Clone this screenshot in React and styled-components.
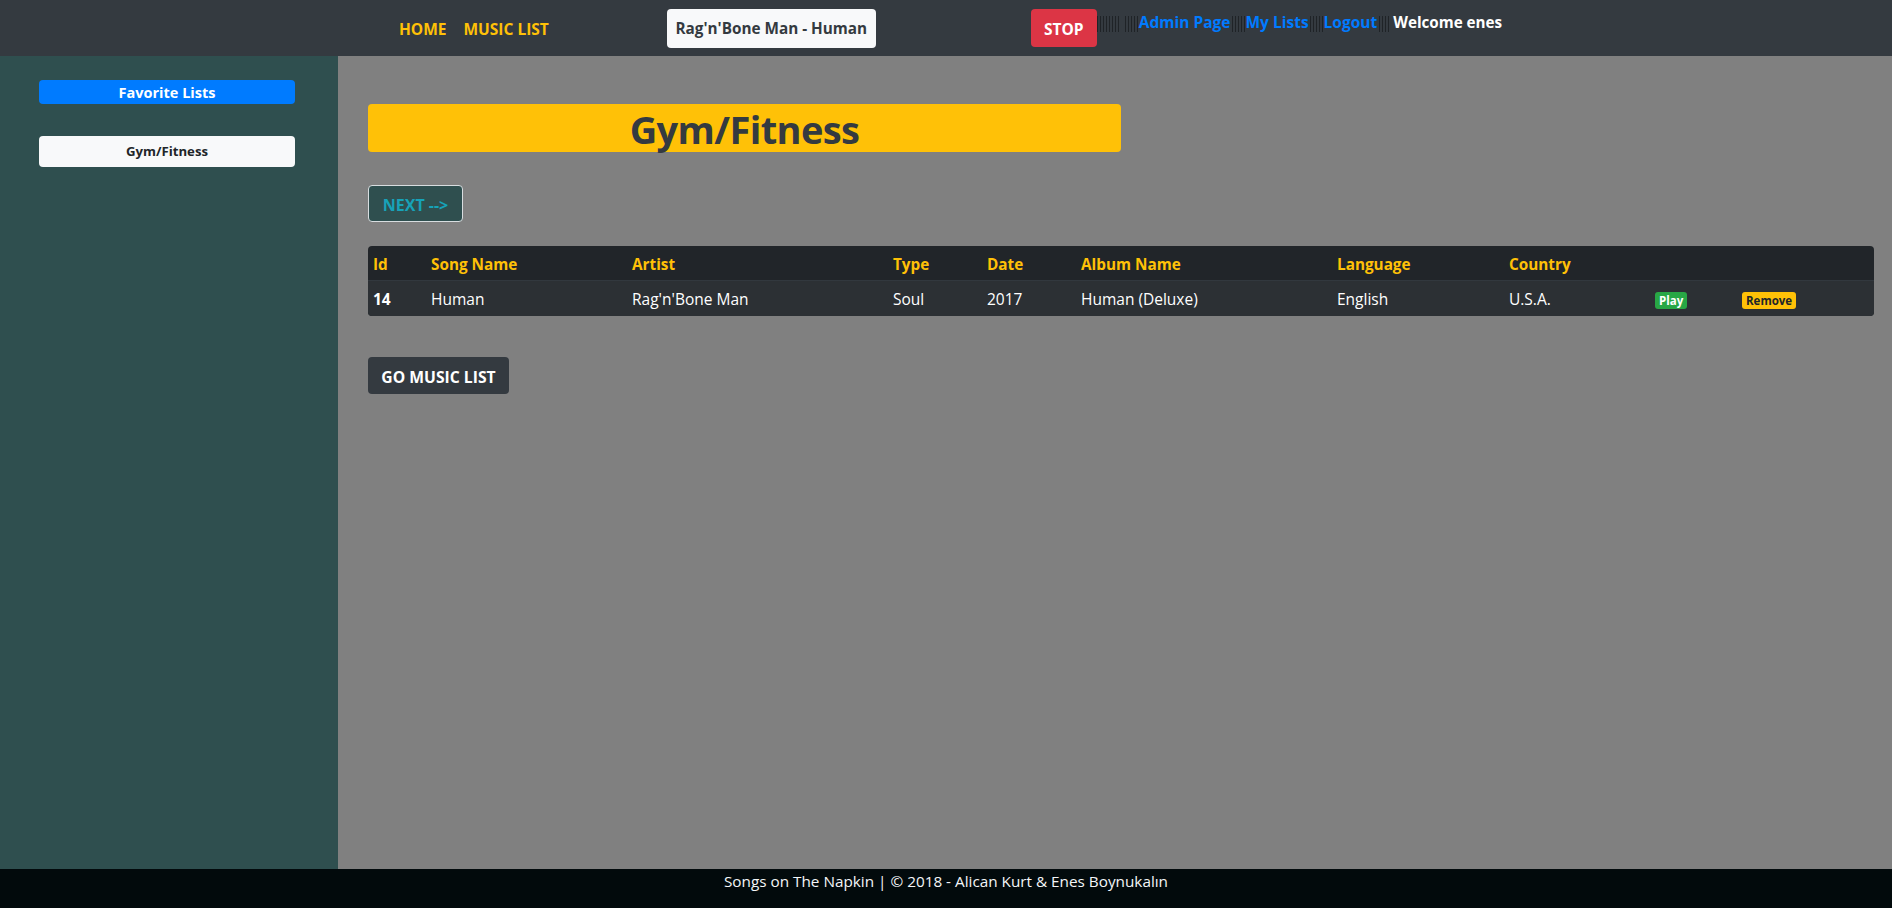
import React from "react";
import styled, { createGlobalStyle } from "styled-components";

const GlobalStyle = createGlobalStyle`
  html, body {
    margin: 0;
    padding: 0;
  }
  body {
    font-family: "Open Sans", "Noto Sans", sans-serif;
    font-size: 15px;
    line-height: 1.5;
    color: #212529;
    background: #808080;
  }
`;

const Page = styled.div`
  display: flex;
  flex-direction: column;
  width: 100%;
  height: 908px;
`;

const Header = styled.header`
  display: flex;
  align-items: center;
  height: 56px;
  flex-shrink: 0;
  background: #343a40;
  padding-left: 399px;
  box-sizing: border-box;
`;

const NavLink = styled.a`
  color: ${(p) => p.color || "#ffc107"};
  font-weight: 700;
  font-size: 15.5px;
  text-decoration: none;
  margin-right: ${(p) => p.gap || 0}px;
  line-height: 1;
  align-self: ${(p) => (p.raised ? "flex-start" : "center")};
  margin-top: ${(p) => (p.raised ? "15px" : "4px")};
`;

const NowPlaying = styled.div`
  display: flex;
  align-items: center;
  justify-content: center;
  width: 209px;
  height: 39px;
  margin-right: 155px;
  background: #f8f9fa;
  border-radius: 4px;
  color: #343a40;
  font-weight: 700;
  font-size: 15.3px;
`;

const StopButton = styled.button`
  width: 66px;
  height: 38px;
  border: none;
  border-radius: 4px;
  background: #dc3545;
  color: #fff;
  font-family: inherit;
  font-weight: 700;
  font-size: 15.5px;
  padding: 2px 0 0;
`;

const Bars = styled.span`
  display: inline-block;
  align-self: flex-start;
  margin-top: 16px;
  width: ${(p) => p.w}px;
  height: 16px;
  margin-left: ${(p) => p.ml || 0}px;
  background: repeating-linear-gradient(
    90deg,
    #1f2327 0px,
    #1f2327 1px,
    transparent 1px,
    transparent 3px
  );
`;

const Welcome = styled.span`
  align-self: flex-start;
  margin-top: 11px;
  margin-left: 2px;
  color: #fff;
  font-weight: 700;
  font-size: 15.2px;
`;

const Middle = styled.div`
  display: flex;
  flex: 1;
  min-height: 0;
`;

const Sidebar = styled.aside`
  width: 338px;
  flex-shrink: 0;
  background: #2f4f4f;
  padding: 24px 43px 0 39px;
  box-sizing: border-box;
  display: flex;
  flex-direction: column;
  gap: 32px;
`;

const SideButton = styled.div`
  display: flex;
  align-items: center;
  justify-content: center;
  height: ${(p) => (p.primary ? 24 : 31)}px;
  padding-top: ${(p) => (p.primary ? 2 : 1)}px;
  box-sizing: border-box;
  border-radius: 4px;
  background: ${(p) => (p.primary ? "#007bff" : "#f8f9fa")};
  color: ${(p) => (p.primary ? "#fff" : "#212529")};
  font-weight: 700;
  font-size: ${(p) => (p.primary ? 14.5 : 13.2)}px;
`;

const Main = styled.main`
  flex: 1;
  padding: 48px 18px 0 30px;
  display: flex;
  flex-direction: column;
  align-items: flex-start;
`;

const TitleBar = styled.h1`
  margin: 0;
  width: 753px;
  height: 48px;
  padding-top: 2px;
  box-sizing: border-box;
  display: flex;
  align-items: center;
  justify-content: center;
  background: #ffc107;
  border-radius: 4px;
  color: #343a40;
  font-size: 38px;
  font-weight: 700;
  letter-spacing: -0.6px;
`;

const NextButton = styled.button`
  margin-top: 33px;
  width: 95px;
  height: 37px;
  background: #2f4f4f;
  border: 1px solid #d8dde0;
  border-radius: 4px;
  color: #17a2b8;
  font-family: inherit;
  font-weight: 700;
  font-size: 16px;
  padding: 2px 0 0;
`;

const Table = styled.table`
  margin-top: 24px;
  width: 1506px;
  border-collapse: separate;
  border-spacing: 0;
  table-layout: fixed;
  background: #212529;
  border-radius: 4px;
  overflow: hidden;
  font-size: 15.5px;
`;

const Th = styled.th`
  text-align: left;
  color: #ffc107;
  font-weight: 700;
  font-size: 15.3px;
  height: 35px;
  padding: 2px 5px 0;
  box-sizing: border-box;
  border-bottom: 1px solid #32383e;
`;

const Td = styled.td`
  color: #fff;
  font-weight: ${(p) => (p.bold ? 700 : 400)};
  height: 35px;
  padding: 3px 5px 0;
  box-sizing: border-box;
  background: #2c3034;
`;

const Badge = styled.span`
  display: inline-block;
  padding: 0 4px;
  line-height: 17px;
  border-radius: 3px;
  font-size: 11.5px;
  font-weight: 700;
  background: ${(p) => p.bg};
  color: ${(p) => p.fg};
`;

const GoButton = styled.button`
  margin-top: 41px;
  width: 141px;
  height: 37px;
  background: #343a40;
  border: none;
  border-radius: 4px;
  color: #fff;
  font-family: inherit;
  font-weight: 700;
  font-size: 15.7px;
  padding: 3px 0 0;
`;

const Footer = styled.footer`
  height: 39px;
  flex-shrink: 0;
  background: #020a0c;
  color: #f4f6f8;
  text-align: center;
  font-size: 15.3px;
  line-height: 25px;
`;

const columns = [
  { label: "Id", w: 58 },
  { label: "Song Name", w: 201 },
  { label: "Artist", w: 261 },
  { label: "Type", w: 94 },
  { label: "Date", w: 94 },
  { label: "Album Name", w: 256 },
  { label: "Language", w: 172 },
  { label: "Country", w: 146 },
  { label: "", w: 87 },
  { label: "", w: 137 },
];

export default function App() {
  return (
    <>
      <GlobalStyle />
      <Page>
        <Header>
          <NavLink gap={17}>HOME</NavLink>
          <NavLink gap={118}>MUSIC LIST</NavLink>
          <NowPlaying>Rag'n'Bone Man - Human</NowPlaying>
          <StopButton>STOP</StopButton>
          <Bars w={22} />
          <Bars w={14} ml={6} />
          <NavLink raised color="#007bff">Admin Page</NavLink>
          <Bars w={14} ml={1} />
          <NavLink raised color="#007bff">My Lists</NavLink>
          <Bars w={14} ml={1} />
          <NavLink raised color="#007bff">Logout</NavLink>
          <Bars w={12} ml={2} />
          <Welcome>Welcome enes</Welcome>
        </Header>
        <Middle>
          <Sidebar>
            <SideButton primary>Favorite Lists</SideButton>
            <SideButton>Gym/Fitness</SideButton>
          </Sidebar>
          <Main>
            <TitleBar>Gym/Fitness</TitleBar>
            <NextButton>NEXT --&gt;</NextButton>
            <Table>
              <colgroup>
                {columns.map((c, i) => (
                  <col key={i} style={{ width: c.w }} />
                ))}
              </colgroup>
              <thead>
                <tr>
                  {columns.map((c, i) => (
                    <Th key={i}>{c.label}</Th>
                  ))}
                </tr>
              </thead>
              <tbody>
                <tr>
                  <Td bold>14</Td>
                  <Td>Human</Td>
                  <Td>Rag'n'Bone Man</Td>
                  <Td>Soul</Td>
                  <Td>2017</Td>
                  <Td>Human (Deluxe)</Td>
                  <Td>English</Td>
                  <Td>U.S.A.</Td>
                  <Td>
                    <Badge bg="#28a745" fg="#fff">Play</Badge>
                  </Td>
                  <Td>
                    <Badge bg="#ffc107" fg="#212529">Remove</Badge>
                  </Td>
                </tr>
              </tbody>
            </Table>
            <GoButton>GO MUSIC LIST</GoButton>
          </Main>
        </Middle>
        <Footer>Songs on The Napkin | © 2018 - Alican Kurt &amp; Enes Boynukalın</Footer>
      </Page>
    </>
  );
}
